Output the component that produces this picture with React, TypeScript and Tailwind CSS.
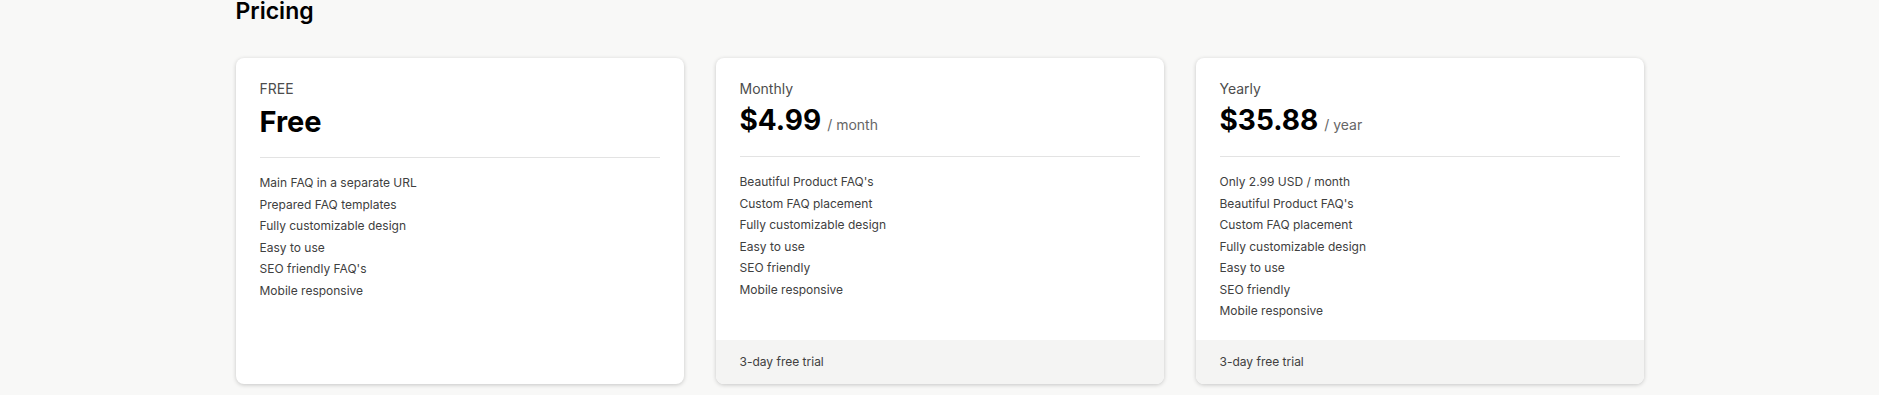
type Plan = {
  label: string;
  price: string;
  period?: string;
  priceClassName: string;
  features: string[];
  footer?: string;
};

const plans: Plan[] = [
  {
    label: "FREE",
    price: "Free",
    priceClassName: "mt-[5px] mb-[17px] text-[29px]",
    features: [
      "Main FAQ in a separate URL",
      "Prepared FAQ templates",
      "Fully customizable design",
      "Easy to use",
      "SEO friendly FAQ's",
      "Mobile responsive",
    ],
  },
  {
    label: "Monthly",
    price: "$4.99",
    period: "/ month",
    priceClassName: "mt-[3px] mb-[18px] text-[28px]",
    features: [
      "Beautiful Product FAQ's",
      "Custom FAQ placement",
      "Fully customizable design",
      "Easy to use",
      "SEO friendly",
      "Mobile responsive",
    ],
    footer: "3-day free trial",
  },
  {
    label: "Yearly",
    price: "$35.88",
    period: "/ year",
    priceClassName: "mt-[3px] mb-[18px] text-[28px]",
    features: [
      "Only 2.99 USD / month",
      "Beautiful Product FAQ's",
      "Custom FAQ placement",
      "Fully customizable design",
      "Easy to use",
      "SEO friendly",
      "Mobile responsive",
    ],
    footer: "3-day free trial",
  },
];

function PlanCard({ plan }: { plan: Plan }) {
  return (
    <div className="flex flex-col overflow-hidden rounded-lg bg-white shadow-[0_1px_4px_rgba(0,0,0,0.2)]">
      <div className="flex-1 px-6 pb-[18px] pt-[21px]">
        <p className="text-sm leading-5 text-[#4d4d4d]">{plan.label}</p>
        <div className={`flex items-baseline gap-[6px] ${plan.priceClassName}`}>
          <span className="font-bold leading-9 text-black">{plan.price}</span>
          {plan.period && <span className="text-sm text-[#666]">{plan.period}</span>}
        </div>
        <div className="h-px bg-[#e3e3e3]" />
        <ul className="mt-[14px] text-xs leading-[21.5px] text-[#404040]">
          {plan.features.map((f) => (
            <li key={f}>{f}</li>
          ))}
        </ul>
      </div>
      {plan.footer && (
        <div className="bg-[#f4f4f3] px-6 py-3 text-xs leading-5 text-[#404040]">
          {plan.footer}
        </div>
      )}
    </div>
  );
}

export default function App() {
  return (
    <div className="min-h-[395px] bg-[#f8f8f7] font-['Inter',sans-serif]">
      <div className="mx-auto w-[1408px]">
        <h1 className="text-[23px] font-semibold leading-none text-black">Pricing</h1>
        <div className="mt-[35px] grid grid-cols-3 gap-8">
          {plans.map((p) => (
            <PlanCard key={p.label} plan={p} />
          ))}
        </div>
      </div>
    </div>
  );
}
